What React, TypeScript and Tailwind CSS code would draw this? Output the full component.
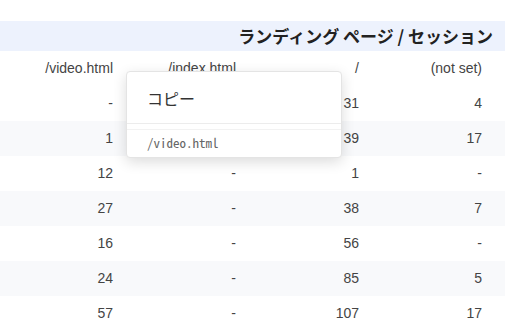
import { Fragment } from 'react';

const sans = '[font-family:"Liberation_Sans",Arial,"Noto_Sans_CJK_JP",sans-serif]';

const columns = ['/video.html', '/index.html', '/', '(not set)'];

const rows: string[][] = [
  ['-', '-', '31', '4'],
  ['1', '-', '39', '17'],
  ['12', '-', '1', '-'],
  ['27', '-', '38', '7'],
  ['16', '-', '56', '-'],
  ['24', '-', '85', '5'],
  ['57', '-', '107', '17'],
];

function Row({ cells, striped }: { cells: string[]; striped?: boolean }) {
  return (
    <div className={`flex h-[35px] items-center pl-[6px] ${striped ? 'bg-[#f8f9fb]' : ''}`}>
      {cells.map((c, i) => (
        <div key={i} className="w-[123px] pr-[16px] text-right text-[14px] text-[#444]">
          {c}
        </div>
      ))}
    </div>
  );
}

export default function App() {
  return (
    <div className={`relative h-[320px] w-[512px] overflow-hidden bg-white ${sans}`}>
      <div className="w-[505px] pt-[21px]">
        {/* header band */}
        <div className="flex h-[30px] items-center justify-end bg-[#edf2fd] pr-[12px]">
          <span className='text-[17px] font-bold text-[#222] [font-family:"Noto_Sans_CJK_JP",sans-serif]'>
            ランディング ページ / セッション
          </span>
        </div>
        <Row cells={columns} />
        {rows.map((r, i) => (
          <Fragment key={i}>
            <Row cells={r} striped={i % 2 === 1} />
          </Fragment>
        ))}
      </div>

      {/* context menu */}
      <div className="absolute left-[126px] top-[71px] w-[216px] rounded-[4px] border border-[#e4e4e4] bg-white shadow-[0_4px_14px_rgba(0,0,0,0.14)]">
        <div className="flex h-[52px] items-center border-b border-[#ececec] pl-[20px]">
          <span className='text-[16px] text-[#333] [font-family:"Noto_Sans_CJK_JP",sans-serif]'>コピー</span>
        </div>
        <div className="mt-[5px] flex h-[28px] items-center border-t border-[#f2f2f2] pl-[20px] pb-[2px]">
          <span className='text-[13px] text-[#666] [font-family:"Noto_Sans_Mono_CJK_JP","DejaVu_Sans_Mono",monospace]'>
            /video.html
          </span>
        </div>
      </div>
    </div>
  );
}
